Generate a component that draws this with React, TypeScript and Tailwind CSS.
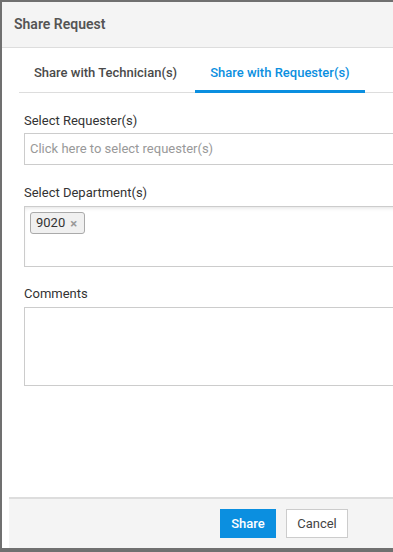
import React, { useState } from 'react';

const font = { fontFamily: 'Roboto, "Liberation Sans", Arial, sans-serif' };

function Tabs() {
  const [active, setActive] = useState(1);
  const tabs = ['Share with Technician(s)', 'Share with Requester(s)'];
  return (
    <div className="ml-[17px] flex border-b border-[#dddddd]">
      {tabs.map((t, i) => (
        <button
          key={t}
          onClick={() => setActive(i)}
          className={
            'mr-[3px] -mb-px h-[45px] px-[15px] pt-[8px] text-[13px] font-medium border-b-[3px] ' +
            (i === active ? 'text-[#0b8fe0] border-[#0b8fe0]' : 'text-[#4a4a4a] border-transparent')
          }
        >
          {t}
        </button>
      ))}
    </div>
  );
}

export default function App() {
  return (
    <div className="w-[393px] h-[552px] overflow-hidden bg-white" style={font}>
      <div className="w-[480px] h-[552px] flex flex-col border-l-2 border-t-2 border-b-4 border-[#707070] bg-white">
        {/* header */}
        <div className="h-[46px] shrink-0 flex items-center pl-[12px] bg-[#f4f4f4] border-b border-[#dddddd]">
          <h2 className="text-[14px] font-semibold text-[#555555]">Share Request</h2>
        </div>

        <Tabs />

        {/* form */}
        <div className="flex-1 pl-[22px] pr-[20px] pt-[20px]">
          <label className="block text-[13px] leading-[16px] text-[#333333]">Select Requester(s)</label>
          <div className="mt-[4px] h-[32px] flex items-center px-[5px] border border-[#cccccc] text-[13px] text-[#999999]">
            Click here to select requester(s)
          </div>

          <label className="block mt-[20px] text-[13px] leading-[16px] text-[#333333]">Select Department(s)</label>
          <div className="mt-[5px] h-[61px] flex items-start px-[5px] pt-[5px] border border-[#cccccc] shadow-[inset_0_3px_4px_-2px_rgba(0,0,0,0.12)]">
            <span className="inline-flex items-center gap-[5px] h-[22px] pl-[5px] pr-[7px] border border-[#aaaaaa] rounded-[3px] bg-[#f0f0f0] text-[13px] text-[#333333]">
              9020
              <span className="text-[13px] font-bold text-[#999999] leading-none">×</span>
            </span>
          </div>

          <label className="block mt-[19px] text-[13px] leading-[16px] text-[#333333]">Comments</label>
          <textarea className="block mt-[5px] w-full h-[79px] border border-[#cccccc] resize-none outline-none" />
        </div>

        {/* footer */}
        <div className="ml-[7px] h-[51px] shrink-0 flex items-center gap-[10px] pl-[211px] bg-[#f4f4f4] border-t-2 border-[#dddddd]">
          <button className="h-[29px] w-[56px] bg-[#0b8fe0] text-white text-[13px] font-medium">Share</button>
          <button className="h-[29px] w-[62px] bg-white border border-[#cccccc] text-[#444444] text-[13px]">Cancel</button>
        </div>
      </div>
    </div>
  );
}
